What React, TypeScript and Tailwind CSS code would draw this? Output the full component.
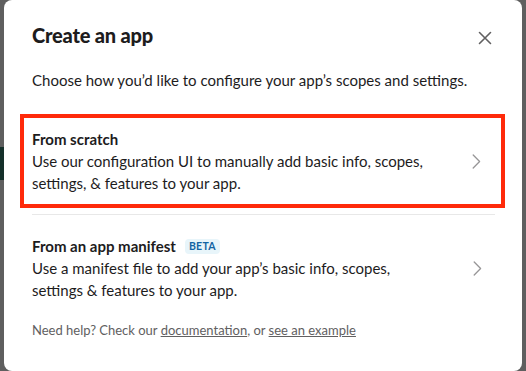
import React from "react";

const Chevron = () => (
  <svg width="9" height="15" viewBox="0 0 9 15" fill="none" className="shrink-0">
    <path d="M1.2 1 L7.6 7.5 L1.2 14" stroke="#979697" strokeWidth="1.3" strokeLinecap="round" strokeLinejoin="round" />
  </svg>
);

const CloseX = () => (
  <svg width="14" height="14" viewBox="0 0 14 14" fill="none">
    <path d="M1.5 1.5 L12.5 12.5 M12.5 1.5 L1.5 12.5" stroke="#616061" strokeWidth="1.6" strokeLinecap="round" />
  </svg>
);

export default function App() {
  return (
    <div
      className="w-[526px] h-[371px] bg-[#5f5f5f] flex overflow-hidden"
      style={{ fontFamily: "Lato, 'Noto Sans', sans-serif" }}
    >
      <div className="w-[4px] flex flex-col shrink-0">
        <div className="h-[147px]" />
        <div className="h-[33px] bg-[#15302a]" />
      </div>
      <div className="flex-1 bg-white rounded-lg flex flex-col text-[#1d1c1d]">
        <div className="flex items-start justify-between pl-[28px] pr-[30px] pt-[21px]">
          <h1 className="text-[20px] leading-[28px] font-black tracking-[-0.2px]">Create an app</h1>
          <button className="mt-[10px]">
            <CloseX />
          </button>
        </div>
        <p className="pl-[28px] mt-[20px] text-[15px] leading-[22px]">
          Choose how you’d like to configure your app’s scopes and settings.
        </p>
        <div className="ml-[16px] mr-[17px] mt-[23px] border-[4px] border-[#ff2a0a] h-[94px] flex items-center pl-[8px] pr-[20px]">
          <div className="w-[410px]">
            <div className="text-[15px] leading-[22px] font-bold">From scratch</div>
            <div className="text-[15px] leading-[22px]">
              Use our configuration UI to manually add basic info, scopes, settings, &amp; features to your app.
            </div>
          </div>
          <div className="flex-1" />
          <Chevron />
        </div>
        <div className="ml-[28px] mr-[27px] mt-[6px] h-px bg-[#e8e8e8]" />
        <div className="flex items-center pl-[28px] pr-[40px] mt-[20px]">
          <div className="w-[410px]">
            <div className="flex items-center gap-[9px]">
              <span className="text-[15px] leading-[22px] font-bold">From an app manifest</span>
              <span className="text-[10.5px] leading-[15px] font-bold text-[#1264a3] bg-[#e8f5fa] rounded-[4px] px-[4px] mt-[1px] tracking-[0.3px]">
                BETA
              </span>
            </div>
            <div className="text-[15px] leading-[22px]">
              Use a manifest file to add your app’s basic info, scopes, settings &amp; features to your app.
            </div>
          </div>
          <div className="flex-1" />
          <Chevron />
        </div>
        <p className="pl-[28px] mt-[20px] text-[13px] leading-[18px] text-[#616061]">
          Need help? Check our <span className="underline">documentation</span>, or{" "}
          <span className="underline">see an example</span>
        </p>
      </div>
      <div className="w-[4px] shrink-0" />
    </div>
  );
}
